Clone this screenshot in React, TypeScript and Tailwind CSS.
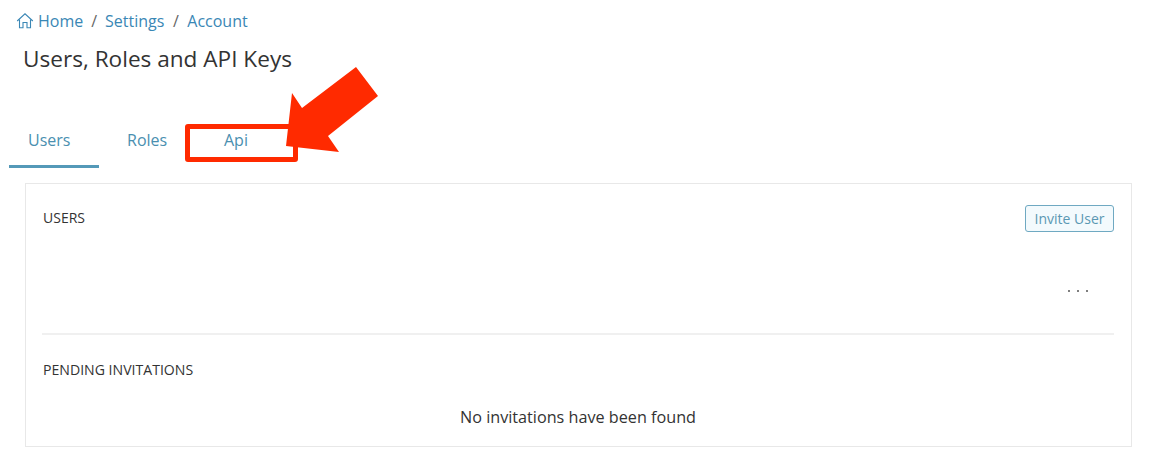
import React from 'react';

const Breadcrumb = () => (
  <nav className="flex items-center h-[22px] pl-4 text-[16px] leading-[22px] text-[#3a87b5]">
    <svg width="18" height="18" viewBox="0 0 18 18" fill="none" stroke="#3a87b5" strokeWidth="1.1" className="mr-[4px]">
      <path d="M1.2 9 L9 1.8 L16.8 9" />
      <path d="M3.5 7.5 V15.8 H7 V10.5 H11 V15.8 H14.5 V7.5" />
    </svg>
    <span>Home</span>
    <span className="mx-[8px] text-[#666]">/</span>
    <span>Settings</span>
    <span className="mx-[8.5px] text-[#666]">/</span>
    <span>Account</span>
  </nav>
);

const Tabs = () => (
  <div className="flex ml-[9px] mt-[45px] text-[16px] leading-[22px] text-[#4a8fb0]">
    <div className="w-[90px] h-[49px] pt-[10px] pl-[19px] font-medium border-b-[3px] border-[#5499b8]">Users</div>
    <div className="w-[125px] pt-[10px] pl-[28px]">Roles</div>
    <div className="pt-[10px]">Api</div>
  </div>
);

const Annotation = () => (
  <>
    <div className="absolute left-[185px] top-[124px] w-[113px] h-[38px] border-[5px] border-[#ff2a00] rounded-[3px]" />
    <svg className="absolute left-0 top-0" width="400" height="170" viewBox="0 0 400 170">
      <polygon points="292,93 302,108 356,67 378,96 328,136 339,152 286,146" fill="#ff2a00" />
    </svg>
  </>
);

export default function App() {
  return (
    <div className="relative w-[1159px] h-[468px] bg-white overflow-hidden text-[#333] font-['Open_Sans',sans-serif]">
      <div className="pt-[10px]">
        <Breadcrumb />
        <h1 className="ml-[23px] mt-[12px] text-[22.6px] leading-[30px] font-normal">Users, Roles and API Keys</h1>
        <Tabs />
        <section className="ml-[25px] mt-[15px] w-[1107px] h-[264px] border border-[#e8e8e8] pt-[21px] pl-[16px] pr-[17px]">
          <div className="flex justify-between items-start h-[28px]">
            <h2 className="ml-[1px] text-[14px] leading-[26px] font-normal">USERS</h2>
            <button className="w-[89px] h-[27px] text-[14px] leading-[23px] text-[#5a98b3] bg-[#f3fafd] border border-[#6fa9c2] rounded-[3px]">
              Invite User
            </button>
          </div>
          <div className="flex justify-end h-[100px] pr-[26px] pt-[57px]">
            <div className="flex gap-[7px] h-[2px]">
              <span className="w-[2px] h-[2px] bg-[#555] rounded-full" />
              <span className="w-[2px] h-[2px] bg-[#555] rounded-full" />
              <span className="w-[2px] h-[2px] bg-[#555] rounded-full" />
            </div>
          </div>
          <div className="border-t-2 border-[#f0f0f0]" />
          <h2 className="ml-[1px] mt-[25px] text-[14.1px] leading-[20px] font-normal">PENDING INVITATIONS</h2>
          <p className="mt-[26px] text-center text-[16.2px] leading-[22px]">No invitations have been found</p>
        </section>
      </div>
      <Annotation />
    </div>
  );
}
